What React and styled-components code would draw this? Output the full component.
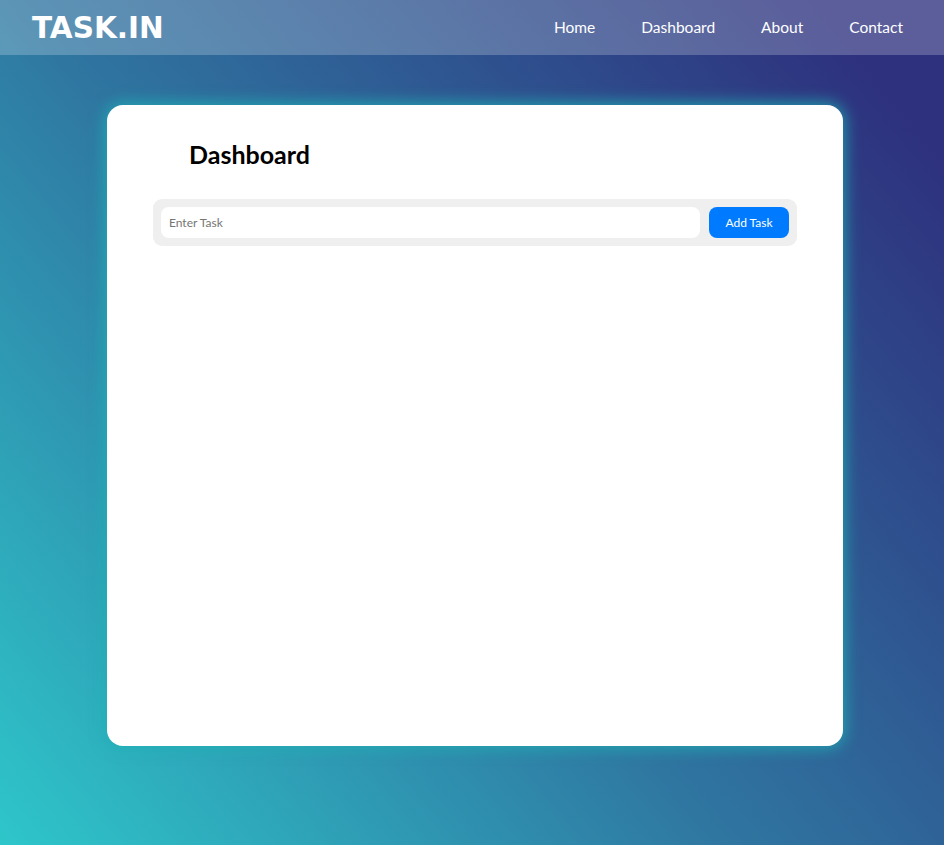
import React from 'react';
import styled, { createGlobalStyle } from 'styled-components';

const GlobalStyle = createGlobalStyle`
  * {
    box-sizing: border-box;
  }
  html, body {
    margin: 0;
    padding: 0;
    min-height: 100%;
  }
  body {
    min-height: 845px;
    font-family: 'Lato', 'Open Sans', sans-serif;
    background: linear-gradient(50deg, #2ec6ca 0%, #2f76a1 44%, #2e317e 92%);
    background-attachment: fixed;
  }
`;

const Page = styled.div`
  min-height: 845px;
  display: flex;
  flex-direction: column;
`;

const Navbar = styled.nav`
  height: 55px;
  display: flex;
  align-items: center;
  justify-content: space-between;
  padding: 0 41px 0 32px;
  background-color: rgba(255, 255, 255, 0.22);
`;

const Logo = styled.div`
  font-family: 'DejaVu Sans', 'Verdana', sans-serif;
  font-weight: 700;
  font-size: 29.5px;
  color: #fff;
  margin-top: 1px;
`;

const NavLinks = styled.ul`
  list-style: none;
  display: flex;
  gap: 46px;
  margin: 0;
  padding: 0;
`;

const NavLink = styled.li`
  font-family: 'Lato', sans-serif;
  font-size: 15.5px;
  color: #fff;
  cursor: pointer;
  margin-top: -2px;
`;

const Main = styled.main`
  padding-top: 50px;
  padding-left: 107px;
`;

const Card = styled.section`
  width: 736px;
  height: 641px;
  background: #fff;
  border-radius: 16px;
  padding: 31px 46px;
  box-shadow: 0 0 16px 2px rgba(30, 175, 180, 0.85);
`;

const Heading = styled.h1`
  font-family: 'Lato', sans-serif;
  font-weight: 700;
  font-size: 25px;
  line-height: 36px;
  color: #000;
  margin: 0 0 27px 36px;
`;

const TaskForm = styled.form`
  display: flex;
  gap: 9px;
  padding: 8px;
  background: #efefef;
  border-radius: 9px;
`;

const TaskInput = styled.input`
  flex: 1;
  height: 31px;
  border: none;
  border-radius: 8px;
  padding: 0 8px;
  font-family: 'Lato', sans-serif;
  font-size: 12px;
  color: #333;
  background: #fff;
  outline: none;

  &::placeholder {
    color: #757575;
  }
`;

const AddButton = styled.button`
  width: 80px;
  height: 31px;
  border: none;
  border-radius: 8px;
  background: #007bff;
  color: #fff;
  font-family: 'Lato', sans-serif;
  font-size: 12px;
  cursor: pointer;
`;

const App = () => {
  return (
    <Page>
      <GlobalStyle />
      <Navbar>
        <Logo>TASK.IN</Logo>
        <NavLinks>
          <NavLink>Home</NavLink>
          <NavLink>Dashboard</NavLink>
          <NavLink>About</NavLink>
          <NavLink>Contact</NavLink>
        </NavLinks>
      </Navbar>
      <Main>
        <Card>
          <Heading>Dashboard</Heading>
          <TaskForm onSubmit={e => e.preventDefault()}>
            <TaskInput placeholder="Enter Task" />
            <AddButton type="submit">Add Task</AddButton>
          </TaskForm>
        </Card>
      </Main>
    </Page>
  );
};

export default App;
